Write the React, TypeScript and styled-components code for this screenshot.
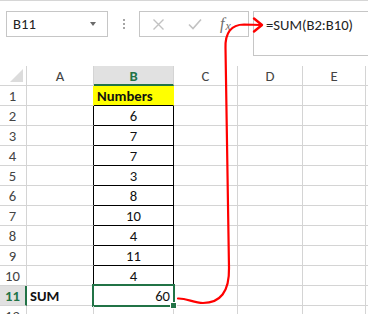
import styled, { createGlobalStyle } from 'styled-components'

const GREEN = '#217346'
const GRID = '#d4d4d4'
const TEXT_SIZE = '11pt'

const GlobalStyle = createGlobalStyle`
  html, body {
    margin: 0;
    padding: 0;
    background: #ffffff;
  }
  body {
    width: 368px;
    height: 314px;
    overflow: hidden;
    font-family: Carlito, Lato, "Liberation Sans", sans-serif;
    color: #222222;
  }
`

const columns = ['A', 'B', 'C', 'D', 'E', '']
const numbers = [6, 7, 7, 3, 8, 10, 4, 11, 4]

export default function App() {
  return (
    <Screen>
      <GlobalStyle />
      <Toolbar>
        <NameBox>
          <span>B11</span>
          <DropArrow />
        </NameBox>
        <Grip>
          <i />
          <i />
          <i />
        </Grip>
        <FormulaButtons>
          <IconSlot>
            <svg width="13" height="13" viewBox="0 0 13 13">
              <path d="M1.5 1.5 L11.5 11.5 M11.5 1.5 L1.5 11.5" stroke="#c2c2c2" strokeWidth="1.4" fill="none" />
            </svg>
          </IconSlot>
          <IconSlot>
            <svg width="14" height="12" viewBox="0 0 14 12">
              <path d="M1 6.5 L5 10.5 L13 1.5" stroke="#c2c2c2" strokeWidth="1.6" fill="none" />
            </svg>
          </IconSlot>
          <Fx>
            f<small>x</small>
          </Fx>
        </FormulaButtons>
        <FormulaBar>=SUM(B2:B10)</FormulaBar>
      </Toolbar>

      <Sheet>
        <Corner>
          <Triangle />
        </Corner>
        {columns.map((c, i) => (
          <ColHeader key={i} $active={c === 'B'}>
            {c}
          </ColHeader>
        ))}

        <RowHeader>1</RowHeader>
        <Cell $edge="yellow" />
        <Cell $fill="#ffff00" $edge="#ffff00" $bottom="#000" $bold>
          Numbers
        </Cell>
        {[0, 1, 2, 3].map((i) => (
          <Cell key={i} />
        ))}

        {numbers.map((n, r) => (
          <Row key={r} label={r + 2} value={n} />
        ))}

        <RowHeader $active>11</RowHeader>
        <Cell $bold>SUM</Cell>
        <Selected $align="right">
          60
          <Handle />
        </Selected>
        {[0, 1, 2, 3].map((i) => (
          <Cell key={i} />
        ))}

        <RowHeader>12</RowHeader>
        {columns.map((_, i) => (
          <Cell key={i} />
        ))}
      </Sheet>

      <Arrow width="368" height="314" viewBox="0 0 368 314">
        <path
          d="M178 298.5 C186 298, 194 303, 203 303 C220 303, 229.5 292, 229 268 L225.5 48 C225 33, 231 24.5, 244 24.5 L261 25"
          stroke="#ff0000"
          strokeWidth="2.2"
          fill="none"
          strokeLinecap="round"
        />
        <path d="M254 18.5 L262 25 L254 31.5" stroke="#ff0000" strokeWidth="2.4" fill="none" strokeLinecap="round" strokeLinejoin="round" />
      </Arrow>
    </Screen>
  )
}

function Row({ label, value }: { label: number; value: number }) {
  return (
    <>
      <RowHeader>{label}</RowHeader>
      <Cell $edge="#000" />
      <Cell $edge="#000" $bottom="#000" $align="center">
        {value}
      </Cell>
      {[0, 1, 2, 3].map((i) => (
        <Cell key={i} />
      ))}
    </>
  )
}

const Screen = styled.div`
  position: relative;
  width: 368px;
  height: 314px;
  overflow: hidden;
`

const Toolbar = styled.div`
  display: flex;
  align-items: flex-start;
  height: 66px;
  border-top: 1px solid #d6d6d6;
  padding-top: 10px;
  box-sizing: border-box;
`

const NameBox = styled.div`
  box-sizing: border-box;
  margin-left: 6px;
  width: 102px;
  height: 26px;
  border: 1px solid #c6c6c6;
  display: flex;
  align-items: center;
  justify-content: space-between;
  padding: 0 11px 0 6px;
  font-size: ${TEXT_SIZE};
  color: #222;
`

const DropArrow = styled.div`
  width: 0;
  height: 0;
  border-left: 3.5px solid transparent;
  border-right: 3.5px solid transparent;
  border-top: 4px solid #6a6a6a;
`

const Grip = styled.div`
  width: 31px;
  height: 26px;
  display: flex;
  flex-direction: column;
  align-items: center;
  justify-content: center;
  gap: 2px;
  i {
    display: block;
    width: 2px;
    height: 2px;
    background: #a6a6a6;
  }
`

const FormulaButtons = styled.div`
  box-sizing: border-box;
  width: 110px;
  height: 26px;
  border: 1px solid #c6c6c6;
  display: flex;
  align-items: center;
  padding-left: 12px;
`

const IconSlot = styled.div`
  width: 36px;
  flex: none;
  display: flex;
  align-items: center;
`

const Fx = styled.div`
  display: flex;
  align-items: baseline;
  font-family: "Liberation Serif", serif;
  font-style: italic;
  font-size: 16px;
  color: #6e6e6e;
  margin-left: -4px;
  small {
    font-size: 12px;
    margin-left: 1px;
    position: relative;
    top: 1px;
  }
`

const FormulaBar = styled.div`
  box-sizing: border-box;
  margin-left: 4px;
  flex: 1;
  height: 45px;
  border: 1px solid #c6c6c6;
  border-right: none;
  padding: 4px 0 0 12px;
  font-size: ${TEXT_SIZE};
  color: #222;
`

const Sheet = styled.div`
  display: grid;
  grid-template-columns: 27px 67px 80px 64px 65px 63px 1fr;
  grid-auto-rows: 20px;
`

const Corner = styled.div`
  box-sizing: border-box;
  border-right: 1px solid ${GRID};
  border-bottom: 1px solid ${GRID};
  display: flex;
  align-items: flex-end;
  justify-content: flex-end;
  padding: 0 3px 3px 0;
`

const Triangle = styled.div`
  width: 0;
  height: 0;
  border-left: 13px solid transparent;
  border-bottom: 13px solid #dcdcdc;
`

const ColHeader = styled.div<{ $active?: boolean }>`
  box-sizing: border-box;
  border-right: 1px solid ${GRID};
  border-bottom: ${(p) => (p.$active ? `2px solid ${GREEN}` : `1px solid ${GRID}`)};
  background: ${(p) => (p.$active ? '#e1e1e1' : '#fff')};
  color: ${(p) => (p.$active ? GREEN : '#444')};
  font-weight: ${(p) => (p.$active ? 700 : 400)};
  font-size: ${TEXT_SIZE};
  display: flex;
  align-items: center;
  justify-content: center;
  padding-top: 1px;
`

const RowHeader = styled.div<{ $active?: boolean }>`
  box-sizing: border-box;
  border-right: ${(p) => (p.$active ? `2px solid ${GREEN}` : `1px solid ${GRID}`)};
  border-bottom: 1px solid ${GRID};
  background: ${(p) => (p.$active ? '#e1e1e1' : '#fff')};
  color: ${(p) => (p.$active ? GREEN : '#444')};
  font-weight: ${(p) => (p.$active ? 700 : 400)};
  font-size: ${TEXT_SIZE};
  display: flex;
  align-items: center;
  justify-content: center;
  padding-right: ${(p) => (p.$active ? '0' : '1px')};
`

const Cell = styled.div<{ $edge?: string; $bottom?: string; $fill?: string; $bold?: boolean; $align?: string }>`
  box-sizing: border-box;
  position: relative;
  border-right: 1px solid ${(p) => p.$edge || GRID};
  border-bottom: 1px solid ${(p) => p.$bottom || GRID};
  background: ${(p) => p.$fill || 'transparent'};
  font-size: ${TEXT_SIZE};
  font-weight: ${(p) => (p.$bold ? 700 : 400)};
  color: #111;
  display: flex;
  align-items: center;
  justify-content: ${(p) => (p.$align === 'center' ? 'center' : p.$align === 'right' ? 'flex-end' : 'flex-start')};
  padding: 1px 3px 0 3px;
  white-space: nowrap;
`

const Selected = styled(Cell)`
  &::after {
    content: '';
    position: absolute;
    left: -2px;
    top: -2px;
    right: -2px;
    bottom: -2px;
    border: 2px solid ${GREEN};
    pointer-events: none;
  }
`

const Handle = styled.span`
  position: absolute;
  right: -4px;
  bottom: -4px;
  width: 5px;
  height: 5px;
  background: ${GREEN};
  border: 1px solid #fff;
  z-index: 2;
`

const Arrow = styled.svg`
  position: absolute;
  left: 0;
  top: 0;
  pointer-events: none;
`
